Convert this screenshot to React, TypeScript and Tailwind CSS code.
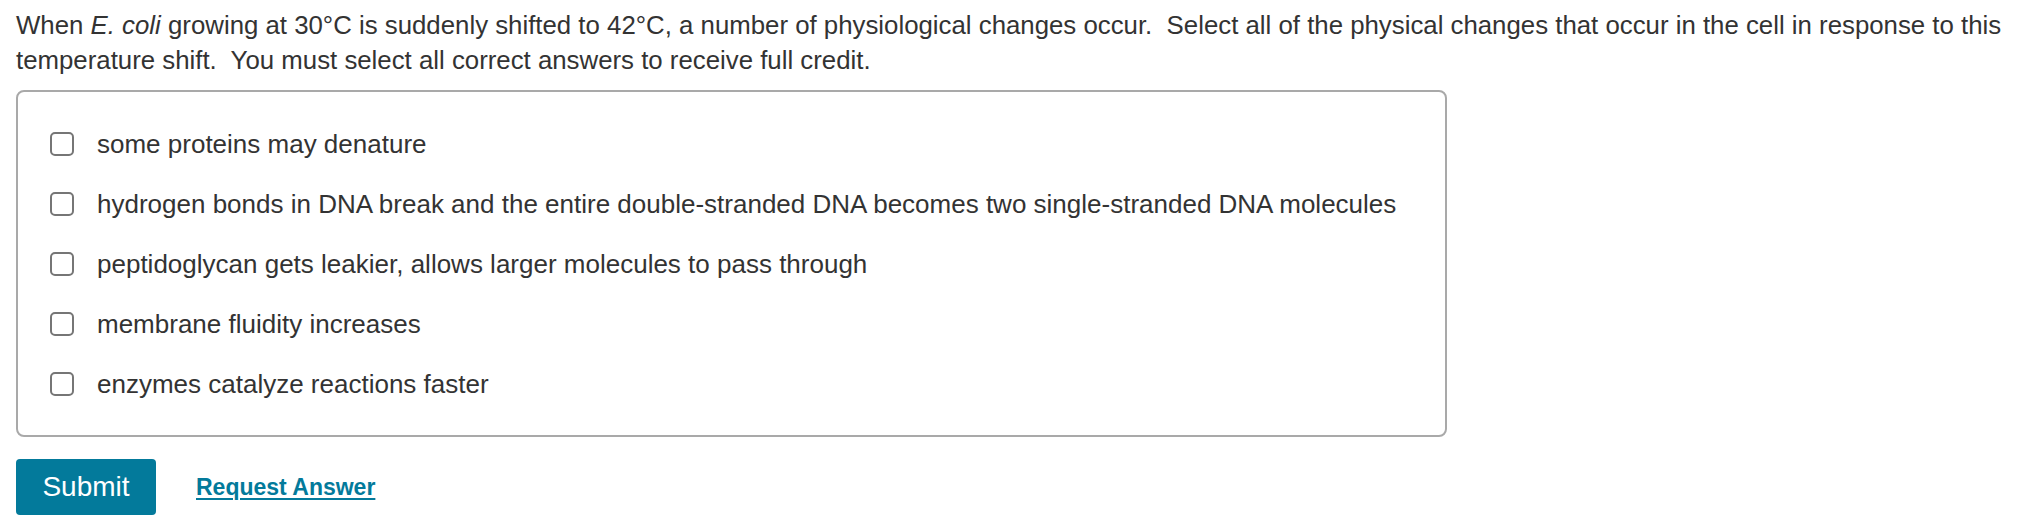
const options = [
  "some proteins may denature",
  "hydrogen bonds in DNA break and the entire double-stranded DNA becomes two single-stranded DNA molecules",
  "peptidoglycan gets leakier, allows larger molecules to pass through",
  "membrane fluidity increases",
  "enzymes catalyze reactions faster",
];

export default function App() {
  return (
    <div className="min-h-[526px] bg-white px-4 pt-[8px] text-[#333] [font-family:'Liberation_Sans',Arial,sans-serif]">
      <p className="whitespace-pre text-[25.8px] leading-[35px]">
        When <i>E. coli</i> growing at 30°C is suddenly shifted to 42°C, a number of physiological changes occur.{"  "}Select all of
        the physical changes that occur in the cell in response to this
        <br />
        temperature shift.{"  "}You must select all correct answers to receive full credit.
      </p>

      <div className="mt-[12px] w-[1431px] rounded-[8px] border-2 border-[#a9a9a9] pb-[21px] pl-[32px] pt-[22px]">
        {options.map((text) => (
          <label key={text} className="flex h-[60px] cursor-pointer items-center gap-[23px]">
            <input type="checkbox" className="peer sr-only" />
            <span className="h-[24px] w-[24px] shrink-0 rounded-[5px] border-2 border-[#767676] bg-white" />
            <span className="text-[26px]">{text}</span>
          </label>
        ))}
      </div>

      <div className="mt-[22px] flex items-center gap-[40px]">
        <button
          type="button"
          className="h-[56px] w-[140px] rounded-[4px] bg-[#037a9b] text-[28px] text-white"
        >
          Submit
        </button>
        <a href="#" className="text-[23px] font-bold text-[#037a9b] underline decoration-2 underline-offset-[3px]">
          Request Answer
        </a>
      </div>
    </div>
  );
}
